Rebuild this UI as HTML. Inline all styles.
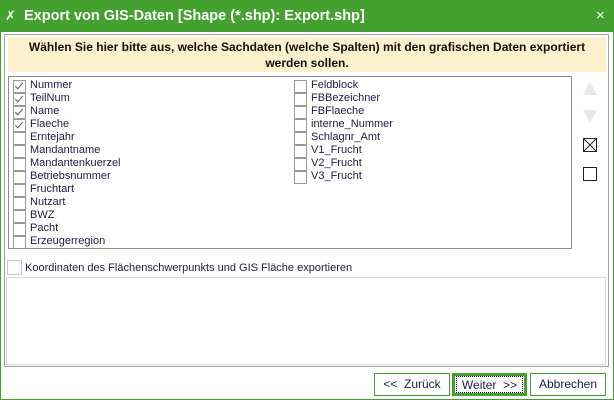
<!DOCTYPE html>
<html><head><meta charset="utf-8"><style>
*{margin:0;padding:0;box-sizing:border-box}
body{width:614px;height:400px;background:#fff;font-family:"Liberation Sans",sans-serif;position:relative;overflow:hidden;color:#1c1c44}
.abs{position:absolute}
#title{left:0;top:0;width:614px;height:32px;background:#45a12f;color:#fff;font-weight:bold;font-size:14.5px;line-height:32px;padding-left:24px}
#win{left:0;top:0;width:614px;height:400px;border:1px solid #45a12f}
#panel{left:4px;top:34px;width:605px;height:333px;border:1px solid #a0a0a0}
#banner{left:8px;top:37px;width:598px;height:35px;background:#fdf0cc;font-weight:bold;font-size:12px;color:#111;text-align:center;line-height:16px;padding-top:2px}
#list{left:8px;top:76px;width:564px;height:173px;border:1px solid #8c8c8c;overflow:hidden}
.row{position:absolute;font-size:11px;height:13px;line-height:13px;padding-left:17px;white-space:nowrap}
.row:before{content:"";position:absolute;left:0;top:1px;width:11px;height:11px;border:1px solid #9a9a9a;background:#fff}
.row.c:after{content:"";position:absolute;left:4px;top:2px;width:3px;height:7px;border-right:1px solid #555;border-bottom:1px solid #555;transform:rotate(40deg)}
.btn{position:absolute;top:373px;height:23px;border:1px solid #45a12f;font-size:12px;text-align:center;line-height:21px;background:#fff;color:#1c1c44}
</style></head><body>
<div class="abs" id="win"></div>
<div class="abs" id="title">Export von GIS-Daten [Shape (*.shp): Export.shp]</div>
<div class="abs" style="left:5px;top:8px;color:#fff;font-size:13px">✗</div>
<div class="abs" style="left:596px;top:7px;color:#fff;font-size:15px">×</div>
<div class="abs" id="panel"></div>
<div class="abs" id="banner">Wählen Sie hier bitte aus, welche Sachdaten (welche Spalten) mit den grafischen Daten exportiert<br>werden sollen.</div>
<div class="abs" id="list">
<div class="row c" style="left:4px;top:2px">Nummer</div>
<div class="row c" style="left:4px;top:15px">TeilNum</div>
<div class="row c" style="left:4px;top:28px">Name</div>
<div class="row c" style="left:4px;top:41px">Flaeche</div>
<div class="row" style="left:4px;top:54px">Erntejahr</div>
<div class="row" style="left:4px;top:67px">Mandantname</div>
<div class="row" style="left:4px;top:80px">Mandantenkuerzel</div>
<div class="row" style="left:4px;top:93px">Betriebsnummer</div>
<div class="row" style="left:4px;top:106px">Fruchtart</div>
<div class="row" style="left:4px;top:119px">Nutzart</div>
<div class="row" style="left:4px;top:132px">BWZ</div>
<div class="row" style="left:4px;top:145px">Pacht</div>
<div class="row" style="left:4px;top:158px">Erzeugerregion</div>
<div class="row" style="left:285px;top:2px">Feldblock</div>
<div class="row" style="left:285px;top:15px">FBBezeichner</div>
<div class="row" style="left:285px;top:28px">FBFlaeche</div>
<div class="row" style="left:285px;top:41px">interne_Nummer</div>
<div class="row" style="left:285px;top:54px">Schlagnr_Amt</div>
<div class="row" style="left:285px;top:67px">V1_Frucht</div>
<div class="row" style="left:285px;top:80px">V2_Frucht</div>
<div class="row" style="left:285px;top:93px">V3_Frucht</div>
</div>
<svg class="abs" style="left:580px;top:80px" width="24" height="110">
<polygon points="3,15 10,2 17,15" fill="#e8e8e8"/>
<polygon points="3,30 10,43 17,30" fill="#e8e8e8"/>
<rect x="3.5" y="58.5" width="13" height="13" fill="none" stroke="#222"/>
<path d="M4 59 L16 71 M16 59 L4 71" stroke="#222"/>
<rect x="3.5" y="87.5" width="13" height="13" fill="none" stroke="#222"/>
</svg>
<div class="abs" style="left:7px;top:260px;width:15px;height:15px;border:1px solid #c8c8c8"></div>
<div class="abs" style="left:25px;top:262px;font-size:11px">Koordinaten des Flächenschwerpunkts und GIS Fläche exportieren</div>
<div class="abs" style="left:6px;top:277px;width:600px;height:88px;border:1px solid #d9d9d9"></div>
<div class="btn" style="left:374px;width:76px">&lt;&lt;&nbsp; Zurück</div>
<div class="btn" style="left:452px;width:75px;border:3px solid #45a12f;line-height:17px"><span style="border:1px dotted #000;display:block;height:17px;margin:0 1px">Weiter &nbsp;&gt;&gt;</span></div>
<div class="btn" style="left:530px;width:76px">Abbrechen</div>
</body></html>
